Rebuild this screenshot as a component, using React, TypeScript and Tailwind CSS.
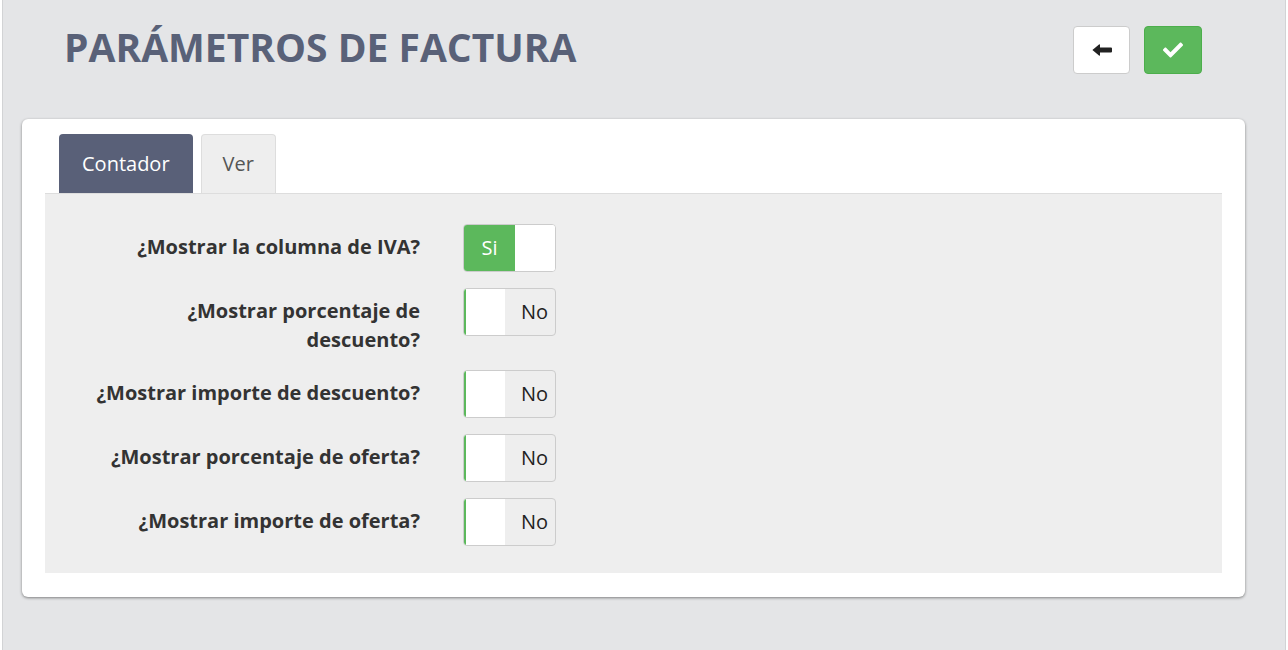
import { FaCheck } from 'react-icons/fa';

const options = [
  { label: '¿Mostrar la columna de IVA?', value: true },
  { label: '¿Mostrar porcentaje de descuento?', value: false },
  { label: '¿Mostrar importe de descuento?', value: false },
  { label: '¿Mostrar porcentaje de oferta?', value: false },
  { label: '¿Mostrar importe de oferta?', value: false },
];

function Toggle({ on }: { on: boolean }) {
  if (on) {
    return (
      <div className="flex w-[93px] h-[48px] shrink-0 rounded-[4px] border border-[#cccccc] overflow-hidden bg-white">
        <div className="w-[51px] bg-[#5cb85c] text-white flex items-center justify-center text-[20px]">Si</div>
        <div className="flex-1 bg-white" />
      </div>
    );
  }
  return (
    <div className="flex w-[93px] h-[48px] shrink-0 rounded-[4px] border border-[#cccccc] overflow-hidden bg-[#eeeeee]">
      <div className="w-[41px] bg-white border-l-2 border-[#5cb85c]" />
      <div className="flex-1 flex items-center justify-end pr-[7px] text-[20px] text-[#222]">No</div>
    </div>
  );
}

export default function App() {
  return (
    <div className="min-h-[650px] bg-[#e4e5e7] font-['Open_Sans',sans-serif] border-l border-r border-[#d2d3d5] mx-[2px]">
      {/* Header */}
      <div className="flex items-start justify-between pl-[61px] pr-[83px] pt-[25px] h-[119px]">
        <h1 className="text-[39px] leading-[44px] font-bold text-[#596178]">PARÁMETROS DE FACTURA</h1>
        <div className="flex gap-[14px] pt-[1px]">
          <button className="w-[57px] h-[48px] rounded-[4px] border border-[#cccccc] bg-white flex items-center justify-center">
            <svg width="20" height="12" viewBox="0 0 20 12" fill="#222">
              <path d="M0.4 6 L7 0.4 Q8 -0.2 8 1 L8 3.5 L19 3.5 Q20 3.5 20 4.5 L20 7.5 Q20 8.5 19 8.5 L8 8.5 L8 11 Q8 12.2 7 11.6 Z" />
            </svg>
          </button>
          <button className="w-[58px] h-[48px] rounded-[4px] border border-[#4cae4c] bg-[#5cb85c] flex items-center justify-center text-white">
            <FaCheck className="w-[20px] h-[20px]" />
          </button>
        </div>
      </div>

      {/* Card */}
      <div className="ml-[19px] mr-[40px] bg-white rounded-[6px] shadow-[0_1px_3px_rgba(0,0,0,0.45)] px-[23px] pt-[15px] pb-[24px]">
        <div className="flex gap-[8px] pl-[14px]">
          <div className="h-[59px] px-[23px] flex items-center bg-[#596078] text-white text-[20px] rounded-t-[4px]">Contador</div>
          <div className="h-[59px] px-[21px] flex items-center bg-[#eeeeee] text-[#555] text-[20px] rounded-t-[4px] border border-b-0 border-[#dddddd]">Ver</div>
        </div>
        <div className="bg-[#eeeeee] border-t border-[#dddddd] pt-[30px] pb-[27px] flex flex-col gap-[16px]">
          {options.map((opt) => (
            <div key={opt.label} className="flex items-start pl-[39px]">
              <div className="w-[336px] shrink-0 text-right font-bold text-[20px] leading-[29px] text-[#333] pt-[8px]">
                {opt.label}
              </div>
              <div className="ml-[43px]">
                <Toggle on={opt.value} />
              </div>
            </div>
          ))}
        </div>
      </div>
    </div>
  );
}
